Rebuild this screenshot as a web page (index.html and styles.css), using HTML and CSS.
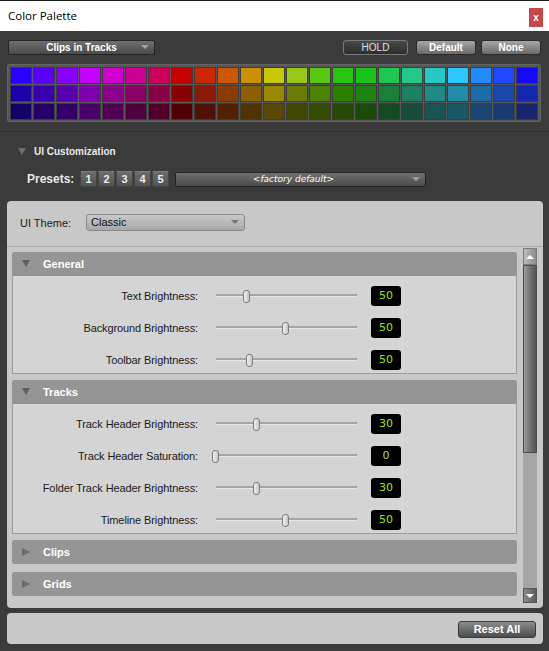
FILE: index.html
```html
<!DOCTYPE html>
<html>
<head>
<meta charset="utf-8">
<title>Color Palette</title>
<link rel="stylesheet" href="styles.css">
</head>
<body>
<div class="titlebar"><span class="title">Color Palette</span><span class="close">x</span></div>

<div class="toolbar">
  <div class="dd dd-clips">Clips in Tracks<span class="dd-arrow"></span></div>
  <div class="btn btn-hold">HOLD</div>
  <div class="btn btn-light btn-default">Default</div>
  <div class="btn btn-light btn-none">None</div>
</div>

<div class="palette">
  <div class="sw" style="background:#2a00ff"></div><div class="sw" style="background:#5a00ff"></div><div class="sw" style="background:#8a00ff"></div><div class="sw" style="background:#c400ff"></div><div class="sw" style="background:#d000d0"></div><div class="sw" style="background:#cc0096"></div><div class="sw" style="background:#cc0058"></div><div class="sw" style="background:#c40000"></div><div class="sw" style="background:#cc2800"></div><div class="sw" style="background:#cc5800"></div><div class="sw" style="background:#cc9000"></div><div class="sw" style="background:#c8c800"></div><div class="sw" style="background:#98c818"></div><div class="sw" style="background:#58c810"></div><div class="sw" style="background:#28c410"></div><div class="sw" style="background:#18c418"></div><div class="sw" style="background:#1ec850"></div><div class="sw" style="background:#22c88a"></div><div class="sw" style="background:#26c8c4"></div><div class="sw" style="background:#2ac8ff"></div><div class="sw" style="background:#228cff"></div><div class="sw" style="background:#2048ff"></div><div class="sw" style="background:#1408ff"></div>
  <div class="sw" style="background:#1a00a8"></div><div class="sw" style="background:#3a00b0"></div><div class="sw" style="background:#5800b0"></div><div class="sw" style="background:#8000b0"></div><div class="sw" style="background:#8c008c"></div><div class="sw" style="background:#880066"></div><div class="sw" style="background:#880044"></div><div class="sw" style="background:#880000"></div><div class="sw" style="background:#8c1808"></div><div class="sw" style="background:#8c3c00"></div><div class="sw" style="background:#8c6000"></div><div class="sw" style="background:#9a8800"></div><div class="sw" style="background:#6a7c00"></div><div class="sw" style="background:#4a8400"></div><div class="sw" style="background:#2c8000"></div><div class="sw" style="background:#1c8210"></div><div class="sw" style="background:#188038"></div><div class="sw" style="background:#1a8060"></div><div class="sw" style="background:#1e8c84"></div><div class="sw" style="background:#208ca8"></div><div class="sw" style="background:#1c6aa8"></div><div class="sw" style="background:#1a48a8"></div><div class="sw" style="background:#1428b0"></div>
  <div class="sw" style="background:#14006a"></div><div class="sw" style="background:#240068"></div><div class="sw" style="background:#320068"></div><div class="sw" style="background:#460068"></div><div class="sw" style="background:#500052"></div><div class="sw" style="background:#50003c"></div><div class="sw" style="background:#500028"></div><div class="sw" style="background:#500000"></div><div class="sw" style="background:#501208"></div><div class="sw" style="background:#502000"></div><div class="sw" style="background:#503200"></div><div class="sw" style="background:#584800"></div><div class="sw" style="background:#404800"></div><div class="sw" style="background:#344c00"></div><div class="sw" style="background:#244800"></div><div class="sw" style="background:#184a08"></div><div class="sw" style="background:#164a20"></div><div class="sw" style="background:#164c38"></div><div class="sw" style="background:#185454"></div><div class="sw" style="background:#185864"></div><div class="sw" style="background:#184670"></div><div class="sw" style="background:#183a70"></div><div class="sw" style="background:#18246c"></div>
</div>

<div class="sep"></div>

<div class="uic-head"><span class="tri-down tri-uic"></span><span>UI Customization</span></div>

<div class="presets">
  <span class="presets-label">Presets:</span>
  <div class="preset-btns">
    <div class="pbtn">1</div><div class="pbtn">2</div><div class="pbtn">3</div><div class="pbtn">4</div><div class="pbtn">5</div>
  </div>
  <div class="dd dd-factory">&lt;factory default&gt;<span class="dd-arrow"></span></div>
</div>

<div class="panel">
  <div class="theme-row">
    <span class="theme-label">UI Theme:</span>
    <div class="theme-dd">Classic<span class="dd-arrow dd-arrow-dark"></span></div>
  </div>
  <div class="scroll-area">
    <div class="sections">
      <div class="sec-head"><span class="tri-down tri-sec"></span><span>General</span></div>
      <div class="sec-body body-general">
        <div class="row"><span class="lbl">Text Brightness:</span><div class="slider"><div class="track"></div><div class="thumb" style="left:27px"></div></div><div class="val">50</div></div>
        <div class="row"><span class="lbl">Background Brightness:</span><div class="slider"><div class="track"></div><div class="thumb" style="left:66px"></div></div><div class="val">50</div></div>
        <div class="row"><span class="lbl">Toolbar Brightness:</span><div class="slider"><div class="track"></div><div class="thumb" style="left:30px"></div></div><div class="val">50</div></div>
      </div>
      <div class="sec-head"><span class="tri-down tri-sec"></span><span>Tracks</span></div>
      <div class="sec-body body-tracks">
        <div class="row"><span class="lbl">Track Header Brightness:</span><div class="slider"><div class="track"></div><div class="thumb" style="left:37px"></div></div><div class="val">30</div></div>
        <div class="row"><span class="lbl">Track Header Saturation:</span><div class="slider"><div class="track"></div><div class="thumb" style="left:-4px"></div></div><div class="val">0</div></div>
        <div class="row"><span class="lbl">Folder Track Header Brightness:</span><div class="slider"><div class="track"></div><div class="thumb" style="left:37px"></div></div><div class="val">30</div></div>
        <div class="row"><span class="lbl">Timeline Brightness:</span><div class="slider"><div class="track"></div><div class="thumb" style="left:66px"></div></div><div class="val">50</div></div>
      </div>
      <div class="sec-head collapsed head-clips"><span class="tri-right"></span><span>Clips</span></div>
      <div class="sec-head collapsed head-grids"><span class="tri-right"></span><span>Grids</span></div>
    </div>
    <div class="scrollbar">
      <div class="sb-btn sb-up"><span class="sb-tri-up"></span></div>
      <div class="sb-thumb"></div>
      <div class="sb-track"></div>
      <div class="sb-btn sb-down"><span class="sb-tri-down"></span></div>
    </div>
  </div>
</div>

<div class="footer"><div class="reset">Reset All</div></div>
</body>
</html>
```

FILE: styles.css
```css
* { box-sizing: border-box; }
html, body { margin: 0; padding: 0; }
body {
  width: 549px;
  height: 651px;
  overflow: hidden;
  background: #3b3b3b;
  font-family: "Liberation Sans", Arial, sans-serif;
}

/* title bar */
.titlebar {
  height: 31px;
  background: #ffffff;
  border-top: 1px solid #1c1c1c;
  display: flex;
  align-items: center;
  padding-left: 8px;
}
.title {
  font-family: "Open Sans", "Noto Sans", sans-serif;
  font-size: 11.5px;
  color: #000;
  margin-top: -2px;
}
.close {
  margin-left: auto;
  margin-right: 6px;
  margin-top: 3px;
  width: 14px;
  height: 19px;
  background: #c9474b;
  color: #fff;
  font-size: 10px;
  font-weight: bold;
  display: flex;
  align-items: center;
  justify-content: center;
}

/* toolbar */
.toolbar {
  display: flex;
  margin-top: 9px;
  padding: 0 8px;
  height: 15px;
}
.dd {
  position: relative;
  height: 15px;
  background: linear-gradient(#707070, #4a4a4a);
  border: 1px solid #242424;
  border-radius: 2px;
  color: #fff;
  font-size: 10px;
  font-weight: bold;
  text-align: center;
  line-height: 13px;
}
.dd-arrow {
  position: absolute;
  right: 5px;
  top: 4px;
  width: 0;
  height: 0;
  border-left: 4px solid transparent;
  border-right: 4px solid transparent;
  border-top: 4px solid #a0a0a0;
}
.dd-clips { width: 147px; }
.btn {
  height: 15px;
  border-radius: 3px;
  font-size: 10px;
  text-align: center;
  line-height: 13px;
}
.btn-hold {
  margin-left: auto;
  width: 65px;
  background: linear-gradient(#4a4a4a, #2c2c2c);
  border: 1px solid #7a7a7a;
  color: #e0e0e0;
}
.btn-light {
  width: 60px;
  background: linear-gradient(#a6a6a6, #6a6a6a);
  border: 1px solid #2a2a2a;
  color: #fff;
  font-weight: bold;
}
.btn-default { margin-left: 8px; }
.btn-none { margin-left: 5px; }

/* palette */
.palette {
  margin: 9px 0 0 7px;
  width: 534px;
  background: #575757;
  border: 1px solid #646464;
  border-radius: 2px;
  padding: 3px 3px 2px 3px;
  display: grid;
  grid-template-columns: repeat(23, 20px);
  grid-auto-rows: 15px;
  gap: 3px;
}
.sw {
  box-shadow: 0 0 0 1px rgba(0, 0, 0, 0.3);
}

.sep {
  margin-top: 9px;
  height: 1px;
  background: #2f2f2f;
}

/* UI customization */
.uic-head {
  display: flex;
  align-items: center;
  margin-top: 13px;
  padding-left: 18px;
  height: 12px;
  color: #e8e8e8;
  font-size: 10px;
  font-weight: bold;
}
.tri-down {
  width: 0;
  height: 0;
  border-left: 4px solid transparent;
  border-right: 4px solid transparent;
  border-top: 7px solid #6e6e6e;
}
.tri-uic { margin-right: 8px; }

.presets {
  display: flex;
  align-items: center;
  margin-top: 14px;
  padding-left: 27px;
  height: 16px;
}
.presets-label {
  color: #e8e8e8;
  font-size: 12px;
  font-weight: bold;
  width: 53px;
}
.preset-btns {
  display: flex;
  gap: 1px;
}
.pbtn {
  width: 17px;
  height: 16px;
  background: linear-gradient(#6c6c6c, #525252);
  border: 1px solid #444;
  border-top-color: #7a7a7a;
  border-radius: 1px;
  color: #eee;
  font-size: 11px;
  font-weight: bold;
  text-align: center;
  line-height: 14px;
}
.dd-factory {
  margin-left: 6px;
  width: 251px;
  font-family: "DejaVu Sans", Verdana, sans-serif;
  font-weight: normal;
  font-style: italic;
  font-size: 9px;
  padding-right: 14px;
}

/* main panel */
.panel {
  margin: 14px 6px 0 7px;
  height: 407px;
  background: #c8c8c8;
  border-radius: 4px;
  padding-bottom: 4px;
}
.theme-row {
  display: flex;
  align-items: center;
  height: 46px;
  padding-left: 13px;
  padding-bottom: 2px;
  border-bottom: 1px solid #a9a9a9;
}
.theme-label {
  width: 66px;
  font-size: 11px;
  color: #1a1a1a;
}
.theme-dd {
  position: relative;
  width: 159px;
  height: 17px;
  background: linear-gradient(#c9c9c9, #a8a8a8);
  border: 1px solid #8a8a8a;
  border-radius: 3px;
  padding-left: 4px;
  font-size: 11px;
  color: #111;
  line-height: 15px;
}
.dd-arrow-dark { border-top-color: #777; top: 5px; }

.scroll-area {
  display: flex;
  height: 357px;
  padding: 1px 6px 0 5px;
  overflow: hidden;
}
.sections {
  width: 505px;
  padding-top: 4px;
}
.sec-head {
  display: flex;
  align-items: center;
  height: 24px;
  background: #959595;
  border-radius: 3px 3px 0 0;
  padding-left: 10px;
  padding-bottom: 1px;
  color: #fff;
  font-size: 11px;
  font-weight: bold;
}
.tri-sec { margin-right: 13px; border-top-color: #5e5e5e; }
.sec-head.collapsed { border-radius: 3px; }
.tri-right {
  width: 0;
  height: 0;
  border-top: 4px solid transparent;
  border-bottom: 4px solid transparent;
  border-left: 8px solid #6c6c6c;
  margin-right: 13px;
}
.head-clips { margin-top: 6px; }
.head-grids { margin-top: 8px; }

.sec-body {
  background: #d4d4d4;
  border: 1px solid #9c9c9c;
  border-top: none;
  padding-top: 4px;
  margin-bottom: 6px;
}
.body-general { height: 98px; }
.body-tracks { height: 130px; margin-bottom: 0; }

.row {
  display: flex;
  align-items: center;
  height: 32px;
}
.lbl {
  width: 185px;
  text-align: right;
  font-size: 11px;
  letter-spacing: -0.1px;
  color: #1a1a1a;
}
.slider {
  position: relative;
  margin-left: 18px;
  width: 141px;
  height: 20px;
}
.track {
  position: absolute;
  left: 0;
  right: 0;
  top: 8px;
  height: 2px;
  background: #a4a4a4;
  border-bottom: 1px solid #e6e6e6;
  box-sizing: content-box;
}
.thumb {
  position: absolute;
  top: 4px;
  width: 7px;
  height: 13px;
  border: 1px solid #7c7c7c;
  border-radius: 3px;
  background: linear-gradient(90deg, #f2f2f2, #c4c4c4);
}
.val {
  margin-left: 14px;
  width: 30px;
  height: 20px;
  background: #000;
  border-radius: 3px;
  color: #a2e010;
  font-family: "DejaVu Sans", Verdana, sans-serif;
  font-size: 11px;
  text-align: center;
  line-height: 20px;
}

/* scrollbar */
.scrollbar {
  width: 14px;
  height: 355px;
  margin-left: 6px;
  display: flex;
  flex-direction: column;
  background: #a6a6a6;
}
.sb-btn {
  display: flex;
  align-items: center;
  justify-content: center;
}
.sb-up {
  height: 17px;
  background: linear-gradient(90deg, #bababa, #8c8c8c);
  border: 1px solid #7c7c7c;
}
.sb-down {
  height: 15px;
  background: linear-gradient(90deg, #8a8a8a, #5c5c5c);
  border: 1px solid #555;
}
.sb-tri-up {
  width: 0;
  height: 0;
  border-left: 4px solid transparent;
  border-right: 4px solid transparent;
  border-bottom: 4px solid #fff;
}
.sb-tri-down {
  width: 0;
  height: 0;
  border-left: 4px solid transparent;
  border-right: 4px solid transparent;
  border-top: 4px solid #fff;
}
.sb-thumb {
  height: 188px;
  background: linear-gradient(90deg, #9c9c9c, #707070 55%, #565656);
  border: 1px solid #4c4c4c;
}
.sb-track { flex: 1; }

/* footer */
.footer {
  margin: 5px 6px 0 7px;
  height: 31px;
  background: #c8c8c8;
  border-radius: 4px;
  display: flex;
  justify-content: flex-end;
  padding: 8px 7px 0 0;
}
.reset {
  width: 78px;
  height: 17px;
  background: linear-gradient(#8c8c8c, #4c4c4c);
  border: 1px solid #3a3a3a;
  border-radius: 3px;
  color: #fff;
  font-size: 11px;
  font-weight: bold;
  text-align: center;
  line-height: 15px;
}
```
